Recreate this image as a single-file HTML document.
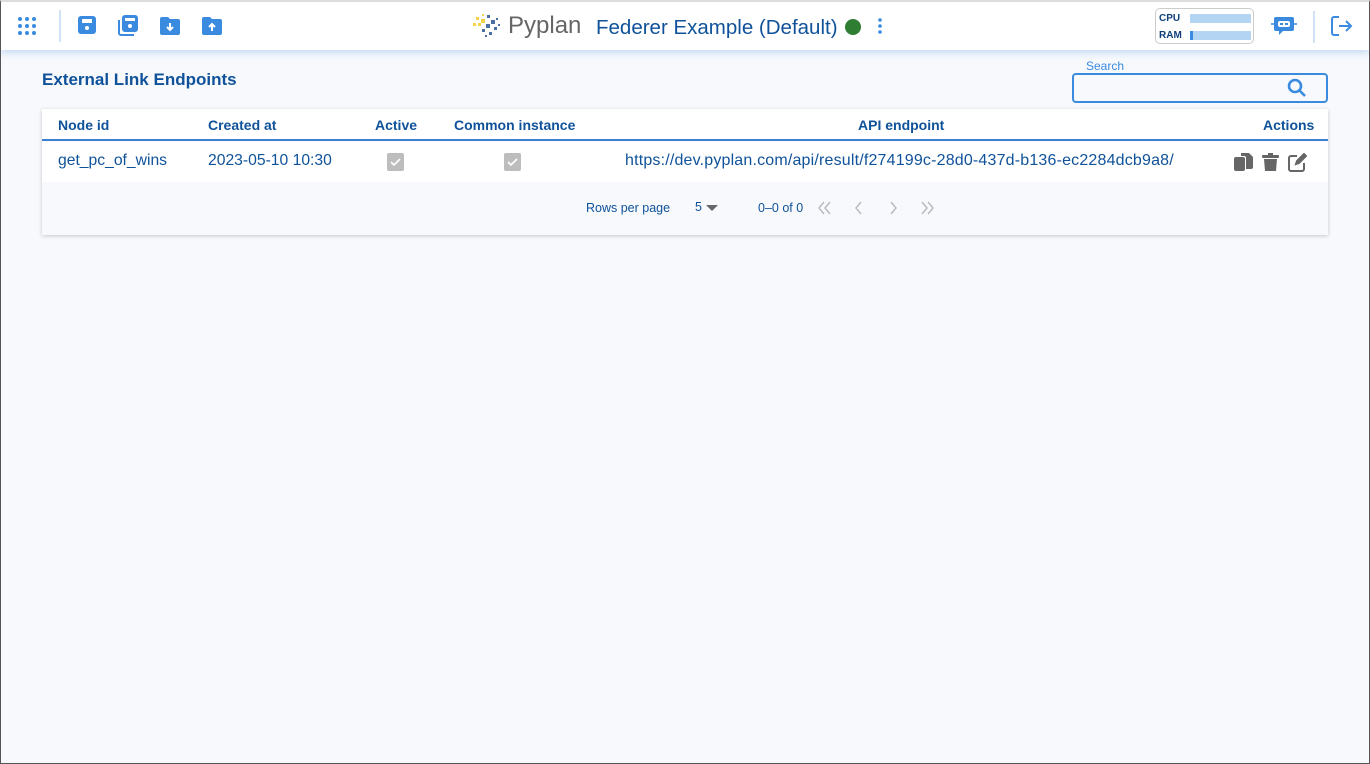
<!DOCTYPE html>
<html><head><meta charset="utf-8"><style>
*{box-sizing:border-box;margin:0;padding:0}
body{width:1370px;height:764px;overflow:hidden;background:#f7f9fc;font-family:"Liberation Sans",sans-serif;position:relative}
.frame{position:absolute;left:0;top:0;width:1370px;height:764px;border:1px solid #555;border-top:2px solid #ddd;pointer-events:none;z-index:9}
.hdr{position:absolute;left:0;top:0;width:1370px;height:50px;background:#fff;box-shadow:0 2px 8px rgba(120,170,230,.45)}
.ab{position:absolute}
.blue{color:#0f529a}
.cell{font-size:15.7px}
</style></head><body>
<div class="frame"></div>
<div class="hdr">
 <svg class="ab" style="left:17px;top:16px" width="20" height="20" viewBox="0 0 20 20" fill="#3a8be0"><circle cx="3" cy="3" r="2"/><circle cx="10" cy="3" r="2"/><circle cx="17" cy="3" r="2"/><circle cx="3" cy="10" r="2"/><circle cx="10" cy="10" r="2"/><circle cx="17" cy="10" r="2"/><circle cx="3" cy="17" r="2"/><circle cx="10" cy="17" r="2"/><circle cx="17" cy="17" r="2"/></svg>
 <div class="ab" style="left:59px;top:10px;width:2px;height:32px;background:#cfe2f6"></div>
 <svg class="ab" style="left:78px;top:16px" width="18" height="18" viewBox="0 0 18 18"><rect x="0" y="0" width="18" height="18" rx="3" fill="#3a8be0"/><rect x="4" y="3" width="10" height="4" fill="#fff"/><circle cx="9" cy="12" r="2" fill="#fff"/></svg>
 <svg class="ab" style="left:118px;top:15px" width="21" height="21" viewBox="0 0 21 21"><path d="M1 5v13a2 2 0 0 0 2 2h13" stroke="#3a8be0" stroke-width="2" fill="none"/><rect x="4" y="0" width="16" height="17" rx="3" fill="#3a8be0"/><rect x="7" y="3" width="10" height="3" fill="#fff"/><circle cx="12" cy="11" r="2" fill="#fff"/></svg>
 <svg class="ab" style="left:160px;top:17px" width="20" height="18" viewBox="0 0 20 18"><path d="M0 2a2 2 0 0 1 2-2h6l2 2h8a2 2 0 0 1 2 2v12a2 2 0 0 1-2 2H2a2 2 0 0 1-2-2z" fill="#3a8be0"/><path d="M10 6v7M7 10l3 3 3-3" stroke="#fff" stroke-width="2" fill="none"/></svg>
 <svg class="ab" style="left:202px;top:17px" width="20" height="18" viewBox="0 0 20 18"><path d="M0 2a2 2 0 0 1 2-2h6l2 2h8a2 2 0 0 1 2 2v12a2 2 0 0 1-2 2H2a2 2 0 0 1-2-2z" fill="#3a8be0"/><path d="M10 14V7M7 10l3-3 3 3" stroke="#fff" stroke-width="2" fill="none"/></svg>
 <svg class="ab" style="left:472px;top:11px" width="32" height="30" viewBox="0 0 32 30"><g fill="#f3d34a"><rect x="4" y="6" width="3" height="3"/><rect x="9" y="8" width="4" height="4"/><rect x="1" y="12" width="3" height="3"/><rect x="6" y="12" width="3" height="3"/><rect x="10" y="3" width="2" height="2"/></g><g fill="#4a6fa5"><rect x="15" y="4" width="3" height="3"/><rect x="19" y="9" width="4" height="4"/><rect x="14" y="13" width="4" height="4"/><rect x="22" y="16" width="3" height="3"/><rect x="10" y="18" width="3" height="3"/><rect x="17" y="21" width="3" height="3"/><rect x="24" y="7" width="2" height="2"/><rect x="13" y="24" width="2" height="2"/><rect x="26" y="13" width="2" height="2"/></g></svg>
 <div class="ab" style="left:508px;top:12px;font-size:24px;color:#666">Pyplan</div>
 <div class="ab" style="left:596px;top:16px;font-size:20.5px;color:#0f529a">Federer Example (Default)</div>
 <div class="ab" style="left:845px;top:19px;width:16px;height:16px;border-radius:50%;background:#2e7d32"></div>
 <svg class="ab" style="left:877px;top:17px" width="6" height="18"><circle cx="3" cy="3" r="1.8" fill="#3a8be0"/><circle cx="3" cy="9" r="1.8" fill="#3a8be0"/><circle cx="3" cy="15" r="1.8" fill="#3a8be0"/></svg>
 <div class="ab" style="left:1155px;top:8px;width:99px;height:36px;border:1px solid #ccc;border-radius:5px;font-size:10px;color:#0f3f7a;font-weight:bold">
  <div class="ab" style="left:3px;top:4px">CPU</div><div class="ab" style="left:34px;top:5px;width:61px;height:9px;background:#b3d4f3"></div>
  <div class="ab" style="left:3px;top:21px">RAM</div><div class="ab" style="left:34px;top:22px;width:61px;height:9px;background:#b3d4f3"></div><div class="ab" style="left:34px;top:22px;width:3px;height:9px;background:#3a8be0"></div>
 </div>
 <svg class="ab" style="left:1271px;top:15px" width="26" height="22" viewBox="0 0 26 22"><path d="M5 2h16a2 2 0 0 1 2 2v10a2 2 0 0 1-2 2H12l-4 4v-4H5a2 2 0 0 1-2-2V4a2 2 0 0 1 2-2z" fill="#3a8be0"/><rect x="7" y="6" width="12" height="6" rx="2" fill="#fff"/><rect x="9" y="8" width="3" height="2" fill="#3a8be0"/><rect x="14" y="8" width="3" height="2" fill="#3a8be0"/><path d="M0 9h3M23 9h3" stroke="#3a8be0" stroke-width="1.5"/></svg>
 <div class="ab" style="left:1313px;top:11px;width:2px;height:32px;background:#cfe2f6"></div>
 <svg class="ab" style="left:1331px;top:16px" width="22" height="20" viewBox="0 0 22 20" fill="none" stroke="#3a8be0" stroke-width="2"><path d="M8 1H3a2 2 0 0 0-2 2v14a2 2 0 0 0 2 2h5M8 10h12M15 5l5 5-5 5"/></svg>
</div>
<div class="ab blue" style="left:42px;top:70px;font-size:17px;font-weight:bold">External Link Endpoints</div>
<div class="ab" style="left:1072px;top:73px;width:256px;height:30px;border:2px solid #3a8be0;border-radius:4px"></div>
<div class="ab" style="left:1082px;top:59px;padding:0 4px;background:#f7f9fc;font-size:12px;color:#3a8be0">Search</div>
<svg class="ab" style="left:1287px;top:78px" width="20" height="20" viewBox="0 0 20 20" fill="none" stroke="#3a8be0" stroke-width="2.6"><circle cx="8" cy="8" r="6"/><path d="M12.5 12.5l5.5 5.5"/></svg>
<div class="ab" style="left:42px;top:109px;width:1286px;height:126px;background:#f7f9fc;box-shadow:0 1px 4px rgba(0,0,0,.2)">
 <div class="ab" style="left:0;top:0;width:100%;height:32px;background:#fff;border-bottom:2px solid #3a7fd0"></div>
 <div class="ab" style="left:0;top:33px;width:100%;height:40px;background:#fff"></div>
 <div class="ab blue" style="top:8px;left:16px;font-size:14px;font-weight:bold">Node id</div>
 <div class="ab blue" style="top:8px;left:166px;font-size:14px;font-weight:bold">Created at</div>
 <div class="ab blue" style="top:8px;left:333px;font-size:14px;font-weight:bold">Active</div>
 <div class="ab blue" style="top:8px;left:412px;font-size:14px;font-weight:bold">Common instance</div>
 <div class="ab blue" style="top:8px;left:816px;font-size:14px;font-weight:bold">API endpoint</div>
 <div class="ab blue" style="top:8px;left:1221px;font-size:14px;font-weight:bold">Actions</div>
 <div class="ab blue cell" style="top:43px;left:16px">get_pc_of_wins</div>
 <div class="ab blue cell" style="top:43px;left:166px">2023-05-10 10:30</div>
 <svg class="ab" style="left:345px;top:44px" width="17" height="18"><rect width="17" height="18" rx="2" fill="#bdbdbd"/><path d="M4 9l3 3 6-6" stroke="#fff" stroke-width="1.6" fill="none"/></svg>
 <svg class="ab" style="left:462px;top:44px" width="17" height="18"><rect width="17" height="18" rx="2" fill="#bdbdbd"/><path d="M4 9l3 3 6-6" stroke="#fff" stroke-width="1.6" fill="none"/></svg>
 <div class="ab blue" style="top:43px;left:583px;font-size:16px;letter-spacing:0.18px">https://dev.pyplan.com/api/result/f274199c-28d0-437d-b136-ec2284dcb9a8/</div>
 <svg class="ab" style="left:1192px;top:44px" width="20" height="19" viewBox="0 0 20 19" fill="#666"><rect x="0" y="4" width="11" height="14" rx="2"/><path d="M7 0h8l4 4v10a2 2 0 0 1-2 2h-5V5a2 2 0 0 0-2-2H7z"/></svg>
 <svg class="ab" style="left:1220px;top:44px" width="17" height="19" viewBox="0 0 17 19" fill="#666"><rect x="0" y="2" width="17" height="3" rx="1"/><rect x="6" y="0" width="5" height="2"/><path d="M2 6h13l-1 12H3z"/></svg>
 <svg class="ab" style="left:1246px;top:44px" width="19" height="19" viewBox="0 0 19 19" fill="none" stroke="#666" stroke-width="2"><path d="M9 3H3a2 2 0 0 0-2 2v11a2 2 0 0 0 2 2h11a2 2 0 0 0 2-2v-6"/><path d="M8 11l1-3 7-7 2 2-7 7z" fill="#666"/></svg>
 <div class="ab blue" style="top:92px;left:544px;font-size:12.5px">Rows per page</div>
 <div class="ab blue" style="top:91px;left:653px;font-size:12.5px">5</div>
 <svg class="ab" style="left:664px;top:96px" width="12" height="6"><path d="M0 0h12L6 6z" fill="#666"/></svg>
 <div class="ab blue" style="top:92px;left:716px;font-size:12.5px">0–0 of 0</div>
 <svg class="ab" style="left:774px;top:91px" width="120" height="16" fill="none" stroke="#bbb" stroke-width="1.5"><path d="M8 2L3 8l5 6M14 2L9 8l5 6M45 2l-5 6 5 6M75 2l5 6-5 6M106 2l5 6-5 6M112 2l5 6-5 6"/></svg>
</div>
</body></html>
